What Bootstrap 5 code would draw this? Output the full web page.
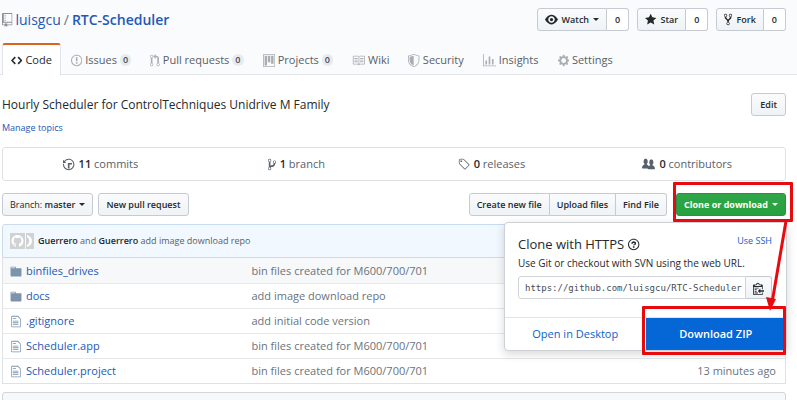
<!DOCTYPE html>
<html lang="en">
<head>
<meta charset="utf-8">
<meta name="viewport" content="width=device-width, initial-scale=1">
<title>luisgcu/RTC-Scheduler</title>
<link href="https://cdn.jsdelivr.net/npm/bootstrap@5.3.0/dist/css/bootstrap.min.css" rel="stylesheet">
<style>
  body { font-family: "Open Sans", "Noto Sans", sans-serif; font-size: 11px; line-height: 16px; color: #24292e; background: #fff; }
  a { color: #2259b8; text-decoration: none; }
  .page-gutter { padding-left: 2px; padding-right: 11px; }
  .oct { height: 13px; width: auto; fill: currentColor; flex: none; }
  .repo-head { background: #fafbfc; border-bottom: 1px solid #e1e4e8; }
  .repo-title { font-size: 14px; line-height: 20px; gap: 3px; }
  .repo-title .oct { height: 14px; color: #8a9097; }
  .repo-title strong { font-weight: 600; }
  .gh-btn { font-size: 9px; font-weight: 600; line-height: 15px; padding: 3px 7px; color: #24292e; border: 1px solid #c6cbd1; border-radius: 3px; background: linear-gradient(#fafbfc, #eff3f6); white-space: nowrap; }
  .gh-btn:hover { border-color: #aab0b6; color: #24292e; }
  .gh-btn .oct { height: 13px; }
  .social-count { font-size: 9px; font-weight: 600; line-height: 15px; padding: 3px 8px; border: 1px solid #c6cbd1; border-left: 0; border-radius: 0 3px 3px 0; background: #fff; color: #24292e; }
  .social-btn { border-radius: 3px 0 0 3px; }
  .edit-btn { padding-left: 8px; padding-right: 8px; }
  .caret-down { border: 3px solid transparent; border-top-color: currentColor; border-bottom: 0; }
  .repo-tabs { margin-bottom: -1px; gap: 1px; }
  .repo-tabs .nav-link { color: #586069; padding: 6px 8px; border: 1px solid transparent; border-top: 2px solid transparent; border-bottom: 0; border-radius: 3px 3px 0 0; gap: 3px; line-height: 18px; white-space: nowrap; }
  .repo-tabs .nav-link .oct { color: #a9aeb4; }
  .repo-tabs .nav-link.active { background: #fff; color: #24292e; border-color: #d96420 #e1e4e8 transparent; }
  .repo-tabs .nav-link.active .oct { color: #24292e; }
  .tab-count { font-size: 9px; line-height: 12px; font-weight: 600; padding: 0 3px; border-radius: 8px; background: #e8eaed; color: #444d56; }
  .repo-about { font-size: 12px; margin-top: 18px; }
  .topic-link { font-size: 9px; line-height: 16px; }
  .stat-box { border: 1px solid #dfe2e5; border-radius: 3px; color: #586069; margin-top: 11px; }
  .stat-box b { font-weight: 600; color: #24292e; }
  .toolbar-row { gap: 5px; }
  .clone-btn { color: #fff; background: linear-gradient(#2fa648, #28a03f); border-color: #279243; }
  .clone-btn:hover { color: #fff; }
  .tease { background: #f1f8ff; border: 1px solid #c8dbef; border-radius: 3px 3px 0 0; font-size: 9px; padding: 8px 7px; color: #586069; }
  .tease a { color: #24292e; font-weight: 600; }
  .avatar-icon { height: 16px; }
  .file-table { --bs-table-bg: transparent; color: #6a737d; table-layout: fixed; border: 1px solid #dfe2e5; border-top: 0; margin: 0; }
  .file-table td { padding: 4px 7px; border-top: 1px solid #e6e9ec; border-bottom: 0; white-space: nowrap; }
  .file-table td:last-child { padding-right: 9px; }
  .file-table tr:first-child td { border-top: 0; padding-top: 5px; background: #f6f8fa; }
  .file-table .oct { color: #7d93ac; width: 12px; }
  .name-col { width: 242px; }
  .age-col { width: 110px; }
  .readme-head { background: #f6f8fa; border: 1px solid #d1d5da; border-radius: 3px 3px 0 0; margin-top: 8px; padding: 8px 10px; }
  .clone-pop { top: 29px; right: -1px; width: 283px; background: #fff; border: 1px solid #cdd1d5; border-radius: 4px; box-shadow: 0 3px 10px rgba(27,31,35,.18); z-index: 5; }
  .clone-body { padding: 11px 14px 18px 13px; }
  .clone-pop h2 { font-size: 13px; line-height: 20px; font-weight: 400; }
  .clone-pop a { color: #0b62cc; }
  .clone-note { font-size: 10px; line-height: 18px; }
  .ssh-link { font-size: 9px; line-height: 14px; }
  .url-box { min-width: 0; flex: 1; height: 23px; border: 1px solid #d1d5da; border-radius: 3px 0 0 3px; padding: 0 1px 0 6px; font-family: "DejaVu Sans Mono", monospace; font-size: 9px; color: #444d56; background: #fff; }
  .copy-btn { border-radius: 0 3px 3px 0; border-left: 0; }
  .clone-foot { border-top: 1px solid #e1e4e8; }
  .clone-foot a { padding: 8px 0; text-align: center; font-weight: 500; flex: 1; }
  .clone-foot .zip-link { background: #0566d6; color: #fff; font-weight: 600; }
  .callout-frame { border: 3px solid #e70b10; border-radius: 1px; pointer-events: none; z-index: 7; }
  .frame-clone { inset: -11px -7px -6px -3px; }
  .frame-zip { inset: -12px 0 -5px -4px; }
  .callout-arrow { top: 27px; right: -6px; width: 30px; height: 92px; z-index: 8; pointer-events: none; }
</style>
</head>
<body>
<svg class="d-none" aria-hidden="true">
  <symbol id="repo" viewBox="0 0 12 16"><path d="M4 9H3V8h1v1zm0-3H3v1h1V6zm0-2H3v1h1V4zm0-2H3v1h1V2zm8-1v12c0 .55-.45 1-1 1H6v2l-1.5-1.5L3 16v-2H1c-.55 0-1-.45-1-1V1c0-.55.45-1 1-1h10c.55 0 1 .45 1 1zm-1 10H1v2h2v-1h3v1h5v-2zm0-10H2v9h9V1z"/></symbol>
  <symbol id="file" viewBox="0 0 12 16"><path d="M6 5H2V4h4v1zM2 8h7V7H2v1zm0 2h7V9H2v1zm0 2h7v-1H2v1zm10-7.5V14c0 .55-.45 1-1 1H1c-.55 0-1-.45-1-1V2c0-.55.45-1 1-1h7.500L12 4.500zM11 5L8 2H1v12h10V5z"/></symbol>
  <symbol id="folder" viewBox="0 0 14 16"><path d="M13 4H7V3c0-.66-.31-1-1-1H1c-.55 0-1 .45-1 1v10c0 .55.45 1 1 1h12c.55 0 1-.45 1-1V5c0-.55-.45-1-1-1zM6 4H1V3h5v1z"/></symbol>
</svg>

<header class="repo-head">
  <div class="page-gutter d-flex justify-content-between align-items-center pt-2">
    <h1 class="repo-title d-flex align-items-center m-0 fw-normal">
      <svg class="oct" viewBox="0 0 12 16"><use href="#repo"/></svg>
      <a href="#">luisgcu</a><span class="text-secondary">/</span><a href="#"><strong>RTC-Scheduler</strong></a>
    </h1>
    <div class="d-flex gap-2">
      <div class="d-flex">
        <button type="button" class="gh-btn social-btn d-flex align-items-center gap-1"><svg class="oct" viewBox="0 0 16 16"><path d="M8.060 2C3 2 0 8 0 8s3 6 8.060 6C13 14 16 8 16 8s-3-6-7.940-6zM8 12c-2.200 0-4-1.780-4-4 0-2.200 1.800-4 4-4 2.220 0 4 1.800 4 4 0 2.220-1.780 4-4 4zm2-4c0 1.110-.89 2-2 2-1.110 0-2-.89-2-2 0-1.110.89-2 2-2 1.110 0 2 .89 2 2z"/></svg>Watch<span class="caret-down"></span></button>
        <a href="#" class="social-count">0</a>
      </div>
      <div class="d-flex">
        <button type="button" class="gh-btn social-btn d-flex align-items-center gap-1"><svg class="oct" viewBox="0 0 14 16"><path d="M14 6l-4.900-.64L7 1 4.900 5.360 0 6l3.600 3.260L2.670 14 7 11.670 11.330 14l-.93-4.740L14 6z"/></svg>Star</button>
        <a href="#" class="social-count">0</a>
      </div>
      <div class="d-flex">
        <button type="button" class="gh-btn social-btn d-flex align-items-center gap-1"><svg class="oct" viewBox="0 0 10 16"><path d="M8 1a1.993 1.993 0 0 0-1 3.720V6L5 8 3 6V4.720A1.993 1.993 0 0 0 2 1a1.993 1.993 0 0 0-1 3.720V6.500l3 3v1.780A1.993 1.993 0 0 0 5 15a1.993 1.993 0 0 0 1-3.720V9.500l3-3V4.720A1.993 1.993 0 0 0 8 1zM2 4.200C1.340 4.200.8 3.650.8 3c0-.65.55-1.200 1.200-1.200.65 0 1.200.55 1.200 1.200 0 .65-.55 1.200-1.200 1.200zm3 10c-.66 0-1.200-.55-1.200-1.200 0-.65.55-1.200 1.200-1.200.65 0 1.200.55 1.200 1.200 0 .65-.55 1.200-1.200 1.200zm3-10c-.66 0-1.200-.55-1.200-1.200 0-.65.55-1.200 1.200-1.200.65 0 1.200.55 1.200 1.200 0 .65-.55 1.200-1.200 1.200z"/></svg>Fork</button>
        <a href="#" class="social-count">0</a>
      </div>
    </div>
  </div>
  <nav class="page-gutter mt-2 pt-1">
    <ul class="nav repo-tabs flex-nowrap">
      <li><a href="#" class="nav-link active d-flex align-items-center" aria-current="page"><svg class="oct" viewBox="0 0 14 16"><path d="M9.500 3L8 4.500 11.500 8 8 11.500 9.500 13 14 8 9.500 3zm-5 0L0 8l4.500 5L6 11.500 2.500 8 6 4.500 4.500 3z"/></svg>Code</a></li>
      <li><a href="#" class="nav-link d-flex align-items-center"><svg class="oct" viewBox="0 0 14 16"><path d="M7 2.300c3.140 0 5.700 2.560 5.700 5.700s-2.560 5.700-5.700 5.700A5.710 5.710 0 0 1 1.300 8c0-3.140 2.560-5.700 5.700-5.700zM7 1C3.140 1 0 4.140 0 8s3.140 7 7 7 7-3.140 7-7-3.140-7-7-7zm1 3H6v5h2V4zm0 6H6v2h2v-2z"/></svg>Issues <span class="tab-count">0</span></a></li>
      <li><a href="#" class="nav-link d-flex align-items-center"><svg class="oct" viewBox="0 0 12 16"><path d="M11 11.280V5c-.03-.78-.34-1.470-.94-2.060C9.460 2.350 8.780 2.030 8 2H7V0L4 3l3 3V4h1c.27.02.48.11.69.31.21.2.3.42.31.69v6.280A1.993 1.993 0 0 0 10 15a1.993 1.993 0 0 0 1-3.720zm-1 2.920c-.66 0-1.200-.55-1.200-1.200 0-.65.55-1.200 1.200-1.200.65 0 1.200.55 1.200 1.200 0 .65-.55 1.200-1.200 1.200zM4 3c0-1.110-.89-2-2-2a1.993 1.993 0 0 0-1 3.720v6.560A1.993 1.993 0 0 0 2 15a1.993 1.993 0 0 0 1-3.720V4.720c.59-.34 1-.98 1-1.720zm-.8 10c0 .66-.55 1.200-1.200 1.200-.65 0-1.200-.55-1.200-1.200 0-.65.55-1.200 1.200-1.200.65 0 1.200.55 1.200 1.200zM2 4.200C1.340 4.200.8 3.650.8 3c0-.65.55-1.200 1.200-1.200.65 0 1.200.55 1.200 1.200 0 .65-.55 1.200-1.200 1.200z"/></svg>Pull requests <span class="tab-count">0</span></a></li>
      <li><a href="#" class="nav-link d-flex align-items-center"><svg class="oct" viewBox="0 0 15 16"><path fill-rule="evenodd" d="M10 12h3V2h-3v10zm-4-2h3V2H6v8zm-4 4h3V2H2v12zm-1 1h13V1H1v14zM14 0H1a1 1 0 0 0-1 1v14a1 1 0 0 0 1 1h13a1 1 0 0 0 1-1V1a1 1 0 0 0-1-1z"/></svg>Projects <span class="tab-count">0</span></a></li>
      <li><a href="#" class="nav-link d-flex align-items-center"><svg class="oct" viewBox="0 0 16 16"><path d="M3 5h4v1H3V5zm0 3h4V7H3v1zm0 2h4V9H3v1zm11-5h-4v1h4V5zm0 2h-4v1h4V7zm0 2h-4v1h4V9zm2-6v9c0 .55-.45 1-1 1H9.500l-1 1-1-1H2c-.55 0-1-.45-1-1V3c0-.55.45-1 1-1h5.500l1 1 1-1H15c.55 0 1 .45 1 1zm-8 .5L7.500 3H2v9h6V3.500zm7-.5H9.500l-.5.5V12h6V3z"/></svg>Wiki</a></li>
      <li><a href="#" class="nav-link d-flex align-items-center"><svg class="oct" viewBox="0 0 14 16"><path fill-rule="evenodd" d="M0 2l7-2 7 2v6.020C14 12.690 8.690 16 7 16c-1.690 0-7-3.310-7-7.980V2zm1 .75L7 1l6 1.750v5.268C13 12.104 8.449 15 7 15c-1.449 0-6-2.896-6-6.982V2.750zm1 .75L7 2v12c-1.207 0-5-2.482-5-5.985V3.500z"/></svg>Security</a></li>
      <li><a href="#" class="nav-link d-flex align-items-center"><svg class="oct" viewBox="0 0 16 16"><path d="M16 14v1H0V0h1v14h15zM5 13H3V8h2v5zm4 0H7V3h2v10zm4 0h-2V6h2v7z"/></svg>Insights</a></li>
      <li><a href="#" class="nav-link d-flex align-items-center"><svg class="oct" viewBox="0 0 14 16"><path d="M14 8.770v-1.600l-1.940-.64-.45-1.090.88-1.840-1.130-1.130-1.810.91-1.090-.45-.69-1.920h-1.600l-.63 1.940-1.110.45-1.840-.88-1.130 1.130.91 1.810-.45 1.090L0 7.230v1.590l1.940.64.45 1.090-.88 1.840 1.130 1.130 1.810-.91 1.090.45.69 1.920h1.590l.63-1.940 1.110-.45 1.840.88 1.130-1.130-.92-1.810.47-1.090L14 8.750v.02zM7 11c-1.660 0-3-1.340-3-3s1.340-3 3-3 3 1.340 3 3-1.340 3-3 3z"/></svg>Settings</a></li>
    </ul>
  </nav>
</header>

<main class="page-gutter">
  <div class="d-flex justify-content-between align-items-center repo-about">
    <span>Hourly Scheduler for ControlTechniques Unidrive M Family</span>
    <button type="button" class="gh-btn edit-btn">Edit</button>
  </div>
  <div class="topic-link pt-1"><a href="#">Manage topics</a></div>

  <div class="stat-box row g-0 text-center">
    <div class="col d-flex justify-content-center align-items-center gap-1 py-2"><svg class="oct" viewBox="0 0 14 16"><path d="M8 13H6V6h5v2H8v5zM7 1C4.810 1 2.870 2.020 1.590 3.590L0 2v4h4L2.500 4.500C3.550 3.170 5.170 2.300 7 2.300c3.140 0 5.700 2.560 5.700 5.700s-2.560 5.700-5.700 5.700A5.710 5.710 0 0 1 1.300 8c0-.34.03-.67.09-1H.08C.03 7.330 0 7.660 0 8c0 3.860 3.140 7 7 7s7-3.140 7-7-3.140-7-7-7z"/></svg><span><b>11</b> commits</span></div>
    <div class="col d-flex justify-content-center align-items-center gap-1 py-2"><svg class="oct" viewBox="0 0 10 16"><path d="M10 5c0-1.110-.89-2-2-2a1.993 1.993 0 0 0-1 3.720v.3c-.02.52-.23.98-.63 1.380-.4.4-.86.61-1.380.63-.83.02-1.480.16-2 .45V4.720a1.993 1.993 0 0 0-1-3.720C.88 1 0 1.890 0 3a2 2 0 0 0 1 1.720v6.560c-.59.35-1 .99-1 1.720 0 1.110.89 2 2 2 1.110 0 2-.89 2-2 0-.53-.2-1-.53-1.360.09-.06.48-.41.59-.47.25-.11.56-.17.94-.17 1.050-.05 1.950-.45 2.750-1.250S8.950 7.770 9 6.730h-.02C9.590 6.370 10 5.730 10 5zM2 1.800c.66 0 1.200.55 1.200 1.200 0 .65-.55 1.200-1.200 1.200C1.350 4.200.8 3.650.8 3c0-.65.55-1.200 1.200-1.200zm0 12.410c-.66 0-1.200-.55-1.200-1.200 0-.65.55-1.200 1.200-1.200.65 0 1.200.55 1.200 1.200 0 .65-.55 1.200-1.200 1.200zm6-8c-.66 0-1.200-.55-1.200-1.200 0-.65.55-1.200 1.200-1.200.65 0 1.200.55 1.200 1.200 0 .65-.55 1.200-1.200 1.200z"/></svg><span><b>1</b> branch</span></div>
    <div class="col d-flex justify-content-center align-items-center gap-1 py-2"><svg class="oct" viewBox="0 0 14 16"><path d="M7.730 1.730C7.260 1.260 6.620 1 5.960 1H3.500C2.130 1 1 2.130 1 3.500v2.470c0 .66.27 1.300.73 1.770l6.060 6.060c.39.39 1.020.39 1.410 0l4.590-4.590a.996.996 0 0 0 0-1.410L7.730 1.730zM2.380 7.090c-.31-.3-.47-.7-.47-1.130V3.500c0-.88.72-1.590 1.590-1.590h2.470c.42 0 .83.16 1.130.47l6.140 6.130-4.730 4.730-6.130-6.150zM3.010 3h2v2H3V3h.01z"/></svg><span><b>0</b> releases</span></div>
    <div class="col d-flex justify-content-center align-items-center gap-1 py-2"><svg class="oct" viewBox="0 0 16 16"><path d="M16 12.999c0 .439-.45 1-1 1H7.995c-.539 0-.994-.447-.995-.999H1c-.54 0-1-.561-1-1 0-2.634 3-4 3-4s.229-.409 0-1c-.841-.621-1.058-.59-1-3 .058-2.419 1.367-3 2.500-3s2.442.58 2.500 3c.058 2.410-.159 2.379-1 3-.229.59 0 1 0 1s1.549.711 2.420 2.088C9.196 9.369 10 8.999 10 8.999s.229-.409 0-1c-.841-.62-1.058-.59-1-3 .058-2.419 1.367-3 2.500-3s2.437.581 2.495 3c.059 2.410-.158 2.380-1 3-.229.59 0 1 0 1s3.005 1.366 3.005 4z"/></svg><span><b>0</b> contributors</span></div>
  </div>

  <div class="toolbar-row d-flex mt-2 pt-1">
    <button type="button" class="gh-btn d-flex align-items-center gap-1"><span><span class="fw-normal">Branch:</span> master</span><span class="caret-down"></span></button>
    <button type="button" class="gh-btn">New pull request</button>
    <div class="btn-group ms-auto">
      <button type="button" class="gh-btn rounded-end-0">Create new file</button>
      <button type="button" class="gh-btn rounded-0 border-start-0">Upload files</button>
      <button type="button" class="gh-btn rounded-start-0 border-start-0">Find File</button>
    </div>
    <div class="position-relative ms-1">
      <button type="button" class="gh-btn clone-btn fw-bold d-flex align-items-center gap-1" aria-expanded="true">Clone or download<span class="caret-down"></span></button>
      <div class="callout-frame frame-clone position-absolute"></div>
      <section class="clone-pop position-absolute">
        <div class="clone-body">
          <div class="d-flex justify-content-between">
            <h2 class="d-flex align-items-center gap-1 m-0">Clone with HTTPS <svg class="oct" viewBox="0 0 14 16"><path d="M6 10h2v2H6v-2zm4-3.500C10 8.640 8 9 8 9H6c0-.55.45-1 1-1h.5c.28 0 .5-.22.5-.5v-1c0-.28-.22-.5-.5-.5h-1c-.28 0-.5.22-.5.5V7H4c0-1.500 1.500-3 3-3s3 1 3 2.500zM7 2.300c3.140 0 5.700 2.560 5.700 5.700s-2.560 5.700-5.700 5.700A5.710 5.710 0 0 1 1.300 8c0-3.140 2.560-5.700 5.700-5.700zM7 1C3.140 1 0 4.140 0 8s3.140 7 7 7 7-3.140 7-7-3.140-7-7-7z"/></svg></h2>
            <a href="#" class="ssh-link">Use SSH</a>
          </div>
          <label for="clone-url" class="clone-note d-block mb-1">Use Git or checkout with SVN using the web URL.</label>
          <div class="d-flex">
            <input id="clone-url" class="url-box" type="text" readonly value="https://github.com/luisgcu/RTC-Scheduler">
            <button type="button" class="gh-btn copy-btn" aria-label="Copy"><svg class="oct" viewBox="0 0 14 16"><path d="M2 13h4v1H2v-1zm5-6H2v1h5V7zm2 3V8l-3 3 3 3v-2h5v-2H9zM4.500 9H2v1h2.500V9zM2 12h2.500v-1H2v1zm9 1h1v2c-.02.28-.11.52-.3.7-.19.18-.42.28-.7.3H1c-.55 0-1-.45-1-1V4c0-.55.45-1 1-1h3c0-1.110.89-2 2-2 1.110 0 2 .89 2 2h3c.55 0 1 .45 1 1v5h-1V6H1v9h10v-2zM2 5h8c0-.55-.45-1-1-1H8c-.55 0-1-.45-1-1s-.45-1-1-1-1 .45-1 1-.45 1-1 1H3c-.55 0-1 .45-1 1z"/></svg></button>
          </div>
        </div>
        <div class="clone-foot d-flex">
          <a href="#">Open in Desktop</a>
          <a href="#" class="zip-link position-relative">Download ZIP<span class="callout-frame frame-zip position-absolute"></span></a>
        </div>
      </section>
      <svg class="callout-arrow position-absolute" viewBox="0 0 30 92" aria-hidden="true"><path d="M24 1L10.500 80" stroke="#e70b10" stroke-width="3" fill="none"/><path d="M4 77l10 2-6 12z" fill="#e70b10"/></svg>
    </div>
  </div>

  <div class="tease d-flex align-items-center mt-2">
    <svg class="avatar-icon flex-shrink-0 me-1" viewBox="0 0 24 16" aria-hidden="true"><path fill="#d0d2d4" d="M0 0h15v16H0zM16 0h8v16h-8z"/><path fill="#fff" transform="translate(1.500 2) scale(.75)" d="M8 0C3.580 0 0 3.580 0 8c0 3.540 2.290 6.530 5.470 7.590.4.07.55-.17.55-.38 0-.19-.01-.82-.01-1.490-2.010.37-2.530-.49-2.690-.94-.09-.23-.48-.94-.82-1.130-.28-.15-.68-.52-.01-.53.63-.01 1.080.58 1.230.82.72 1.210 1.870.87 2.330.66.07-.52.28-.87.51-1.070-1.780-.2-3.640-.89-3.640-3.950 0-.87.31-1.590.82-2.150-.08-.2-.36-1.020.08-2.120 0 0 .67-.21 2.200.82.64-.18 1.320-.27 2-.27.68 0 1.360.09 2 .27 1.530-1.040 2.200-.82 2.200-.82.44 1.100.16 1.920.08 2.120.51.56.82 1.270.82 2.150 0 3.070-1.870 3.750-3.650 3.950.29.25.54.73.54 1.480 0 1.070-.01 1.930-.01 2.200 0 .21.15.46.55.38A8.013 8.013 0 0 0 16 8c0-4.420-3.580-8-8-8z"/><path fill="#fff" d="M17 2c3 1 5 3 5 6s-2 5-5 6v-2c3-2 3-6 0-8z"/></svg>
    <span><a href="#">Guerrero</a> and <a href="#">Guerrero</a> add image download repo</span>
  </div>
  <table class="table file-table">
    <colgroup><col class="name-col"><col><col class="age-col"></colgroup>
    <tbody>
      <tr><td><span class="d-flex align-items-center gap-1"><svg class="oct" viewBox="0 0 14 16"><use href="#folder"/></svg><a href="#">binfiles_drives</a></span></td><td>bin files created for M600/700/701</td><td></td></tr>
      <tr><td><span class="d-flex align-items-center gap-1"><svg class="oct" viewBox="0 0 14 16"><use href="#folder"/></svg><a href="#">docs</a></span></td><td>add image download repo</td><td></td></tr>
      <tr><td><span class="d-flex align-items-center gap-1"><svg class="oct" viewBox="0 0 12 16"><use href="#file"/></svg><a href="#">.gitignore</a></span></td><td>add initial code version</td><td></td></tr>
      <tr><td><span class="d-flex align-items-center gap-1"><svg class="oct" viewBox="0 0 12 16"><use href="#file"/></svg><a href="#">Scheduler.app</a></span></td><td>bin files created for M600/700/701</td><td></td></tr>
      <tr><td><span class="d-flex align-items-center gap-1"><svg class="oct" viewBox="0 0 12 16"><use href="#file"/></svg><a href="#">Scheduler.project</a></span></td><td>bin files created for M600/700/701</td><td class="text-end">13 minutes ago</td></tr>
    </tbody>
  </table>
  <div class="readme-head"></div>
</main>
<script src="https://cdn.jsdelivr.net/npm/bootstrap@5.3.0/dist/js/bootstrap.bundle.min.js"></script>
</body>
</html>
